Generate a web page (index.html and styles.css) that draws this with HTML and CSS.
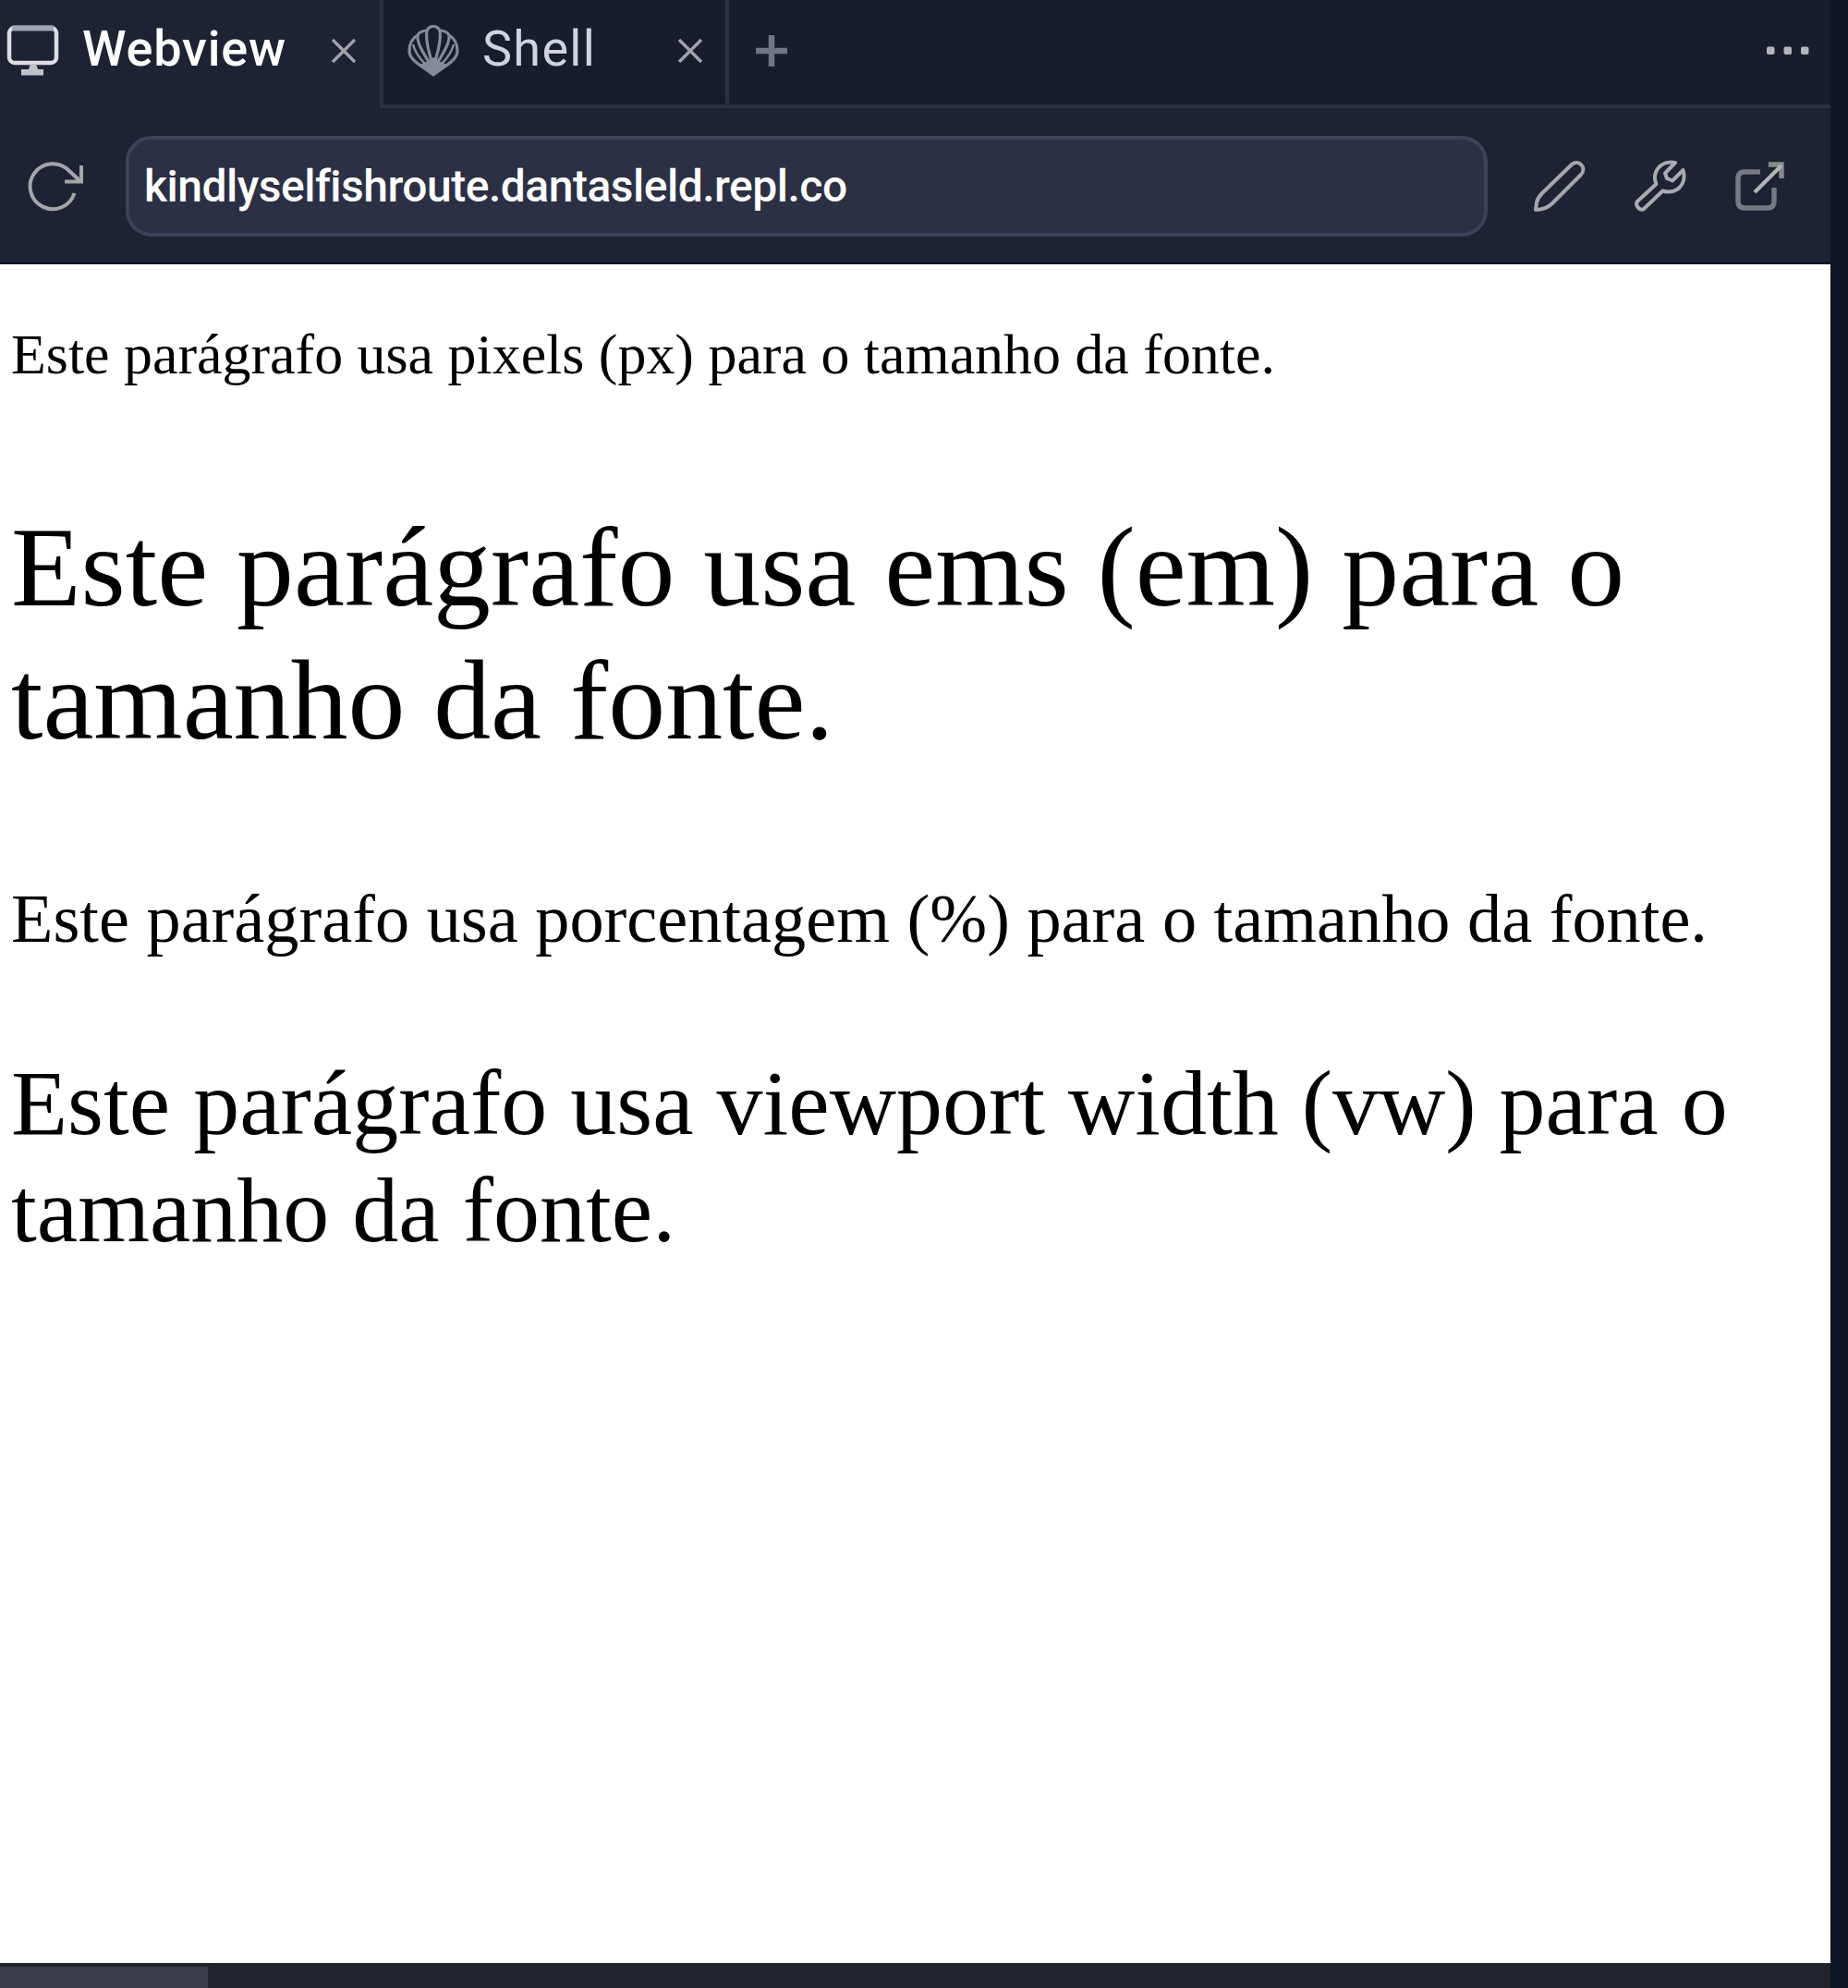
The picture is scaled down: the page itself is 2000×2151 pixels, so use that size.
FILE: index.html
```html
<!DOCTYPE html>
<html lang="pt-BR">
<head>
<meta charset="utf-8">
<title>Webview</title>
<link rel="stylesheet" href="styles.css">
</head>
<body>
<main class="pane">
  <nav class="tabs">
    <div class="tab tab-active">
      <svg class="tab-icon" viewBox="0 0 62 62"><rect x="7" y="6" width="51" height="38" rx="6" fill="none" stroke="#dcdee3" stroke-width="4.500"/><path d="M10 6.500H55" stroke="#a0a6b0" stroke-width="6"/><path d="M30 45H36L38 51H44V57.500H20V51H28Z" fill="#bfc2ca"/></svg>
      <span class="tab-label label-webview">Webview</span>
      <svg class="close" viewBox="0 0 30 30"><path d="M3 3L27 27M27 3L3 27" stroke="#a0a2a8" stroke-width="3.400"/></svg>
    </div>
    <div class="tab tab-idle">
      <svg class="tab-icon" viewBox="0 0 62 62"><g fill="none" stroke="#858b95" stroke-width="3.200" stroke-linejoin="round"><path d="M31 57L20 49C11 43 5 38 5 31C5 23 9 17 14 14C15 11 20 9 24 9C27 3 35 3 38 9C42 9 47 11 48 14C53 17 57 23 57 31C57 38 51 43 42 49Z"/><path d="M24 9C22.500 18 26 32 29 42M38 9C39.500 18 36 32 33 42M14 14C13 22 20 33 26 43M48 14C49 22 42 33 36 43"/><path d="M9 24C11 32 16 39 22 45M53 24C51 32 46 39 40 45" stroke-width="2.500"/></g><path d="M17 45.500L26 42L31 38L36 42L45 45.500L31 58Z" fill="#858b95"/></svg>
      <span class="tab-label label-shell">Shell</span>
      <svg class="close" viewBox="0 0 30 30"><path d="M3 3L27 27M27 3L3 27" stroke="#a0a2a8" stroke-width="3.400"/></svg>
    </div>
    <div class="tab-rest">
      <svg class="plus" viewBox="0 0 36 36"><path d="M18 1V35M1 18H35" stroke="#6f7581" stroke-width="6.500"/></svg>
      <svg class="dots" viewBox="0 0 48 12"><g fill="#b1b4b9"><rect x="1" y="1.500" width="8.500" height="8.500" rx="2"/><rect x="19.500" y="1.500" width="8.500" height="8.500" rx="2"/><rect x="38" y="1.500" width="8.500" height="8.500" rx="2"/></g></svg>
    </div>
  </nav>
  <div class="toolbar">
    <svg class="tool reload" viewBox="0 0 60 60"><path d="M50.500 37A24.500 24.500 0 1 1 44.500 12.500L57 24M58 7V24.500H40" fill="none" stroke="#a4a6aa" stroke-width="4"/></svg>
    <div class="address">kindlyselfishroute.dantasleld.repl.co</div>
    <svg class="tool pencil" viewBox="0 0 60 60"><path d="M4 55L5 47C6 43 8 40 11 37L43 6C50 0 60 9 53 17L22 48C17 53 12 55 4 55Z" fill="none" stroke="#a4a6aa" stroke-width="4" stroke-linejoin="round"/></svg>
    <svg class="tool wrench" viewBox="0 0 60 60"><path d="M47 4C35 2 28 8 25.500 16C24.500 20 25 24 26.500 27L6 46C3 50 9 57 13 54L33.500 34.500C38 36 44 36 49 33C56 28 58 20 55.500 12L44 23.500L38 21L36 15.500Z" fill="none" stroke="#a9abb0" stroke-width="4" stroke-linejoin="round"/></svg>
    <svg class="tool external" viewBox="0 0 60 60"><path d="M30 14H13Q6 14 6 21V46Q6 53 13 53H38Q45 53 45 46V31" fill="none" stroke="#757a83" stroke-width="5.500"/><path d="M39 6H53V21" fill="none" stroke="#858991" stroke-width="5.500"/><path d="M24 36L53 7" stroke="#b1b4b9" stroke-width="4"/></svg>
  </div>
  <article class="page">
    <p class="size-px">Este parágrafo usa pixels (px) para o tamanho da fonte.</p>
    <p class="size-em">Este parágrafo usa ems (em) para o<br>tamanho da fonte.</p>
    <p class="size-percent">Este parágrafo usa porcentagem (%) para o tamanho da fonte.</p>
    <p class="size-vw">Este parágrafo usa viewport width (vw) para o<br>tamanho da fonte.</p>
  </article>
  <div class="scroll-track"><div class="scroll-thumb"></div></div>
</main>
</body>
</html>
```
FILE: styles.css
```css
* { box-sizing: border-box; }

body {
  margin: 0;
  background: #0e1525;
}

svg { display: block; flex: none; }

.pane {
  display: flex;
  flex-direction: column;
  width: 1981px;
  height: 2151px;
}

.tabs {
  display: flex;
  flex: none;
  height: 117px;
  background: #171d2d;
  font-family: Roboto, sans-serif;
}

.tab {
  display: flex;
  align-items: center;
  padding-bottom: 7px;
}

.tab-active {
  width: 411px;
  padding-left: 3px;
  background: #1d2333;
}

.tab-idle {
  width: 378px;
  padding-left: 23px;
  padding-bottom: 3px;
  border: solid #2b3042;
  border-width: 0 4px 4px;
}

.tab-icon { width: 62px; height: 62px; }

.tab-label {
  padding-bottom: 4px;
  font-size: 54px;
  line-height: 60px;
  white-space: nowrap;
}

.label-webview {
  width: 268px;
  margin-left: 24px;
  color: #fff;
  font-weight: 500;
  letter-spacing: 0.8px;
}

.label-shell {
  width: 210px;
  margin-left: 22px;
  color: #d0d4dc;
  letter-spacing: 1.300px;
}

.close { width: 30px; height: 30px; }

.tab-rest {
  display: flex;
  flex: 1;
  align-items: center;
  justify-content: space-between;
  padding: 0 22px 3px 28px;
  border-bottom: 4px solid #2b3042;
}

.plus { width: 36px; height: 36px; }
.dots { width: 48px; height: 12px; }

.toolbar {
  display: flex;
  flex: none;
  align-items: flex-start;
  height: 169px;
  padding-top: 30px;
  background: #1d2333;
  border-bottom: 3px solid #121828;
}

.address {
  width: 1474px;
  height: 109px;
  margin-left: 46px;
  padding-left: 16px;
  background: #2b3044;
  border: 4px solid #3b435a;
  border-radius: 28px;
  color: #fff;
  font: 500 48px/101px Roboto, sans-serif;
  letter-spacing: -0.500px;
}

.tool { width: 60px; height: 60px; margin-top: 25px; }
.reload { margin-left: 30px; }
.pencil { margin-left: 48px; }
.wrench { margin-left: 48px; }
.external { margin-left: 49px; }

.page {
  flex: 1;
  padding: 62px 0 0 12px;
  background: #fff;
  color: #000;
  font-family: "Liberation Serif", serif;
  white-space: nowrap;
}

.page p { margin: 0; }

.size-px { font-size: 61.900px; line-height: 70px; }

.page .size-em {
  margin-top: 124px;
  font-size: 123.800px;
  line-height: 143.500px;
}

.page .size-percent {
  margin-top: 123px;
  font-size: 74.300px;
  line-height: 85px;
}

.page .size-vw {
  margin-top: 99px;
  font-size: 100px;
  line-height: 116.300px;
}

.scroll-track {
  flex: none;
  height: 27px;
  padding-top: 4px;
  background: #21242c;
}

.scroll-thumb {
  width: 225px;
  height: 23px;
  background: #3b3e49;
}
```
